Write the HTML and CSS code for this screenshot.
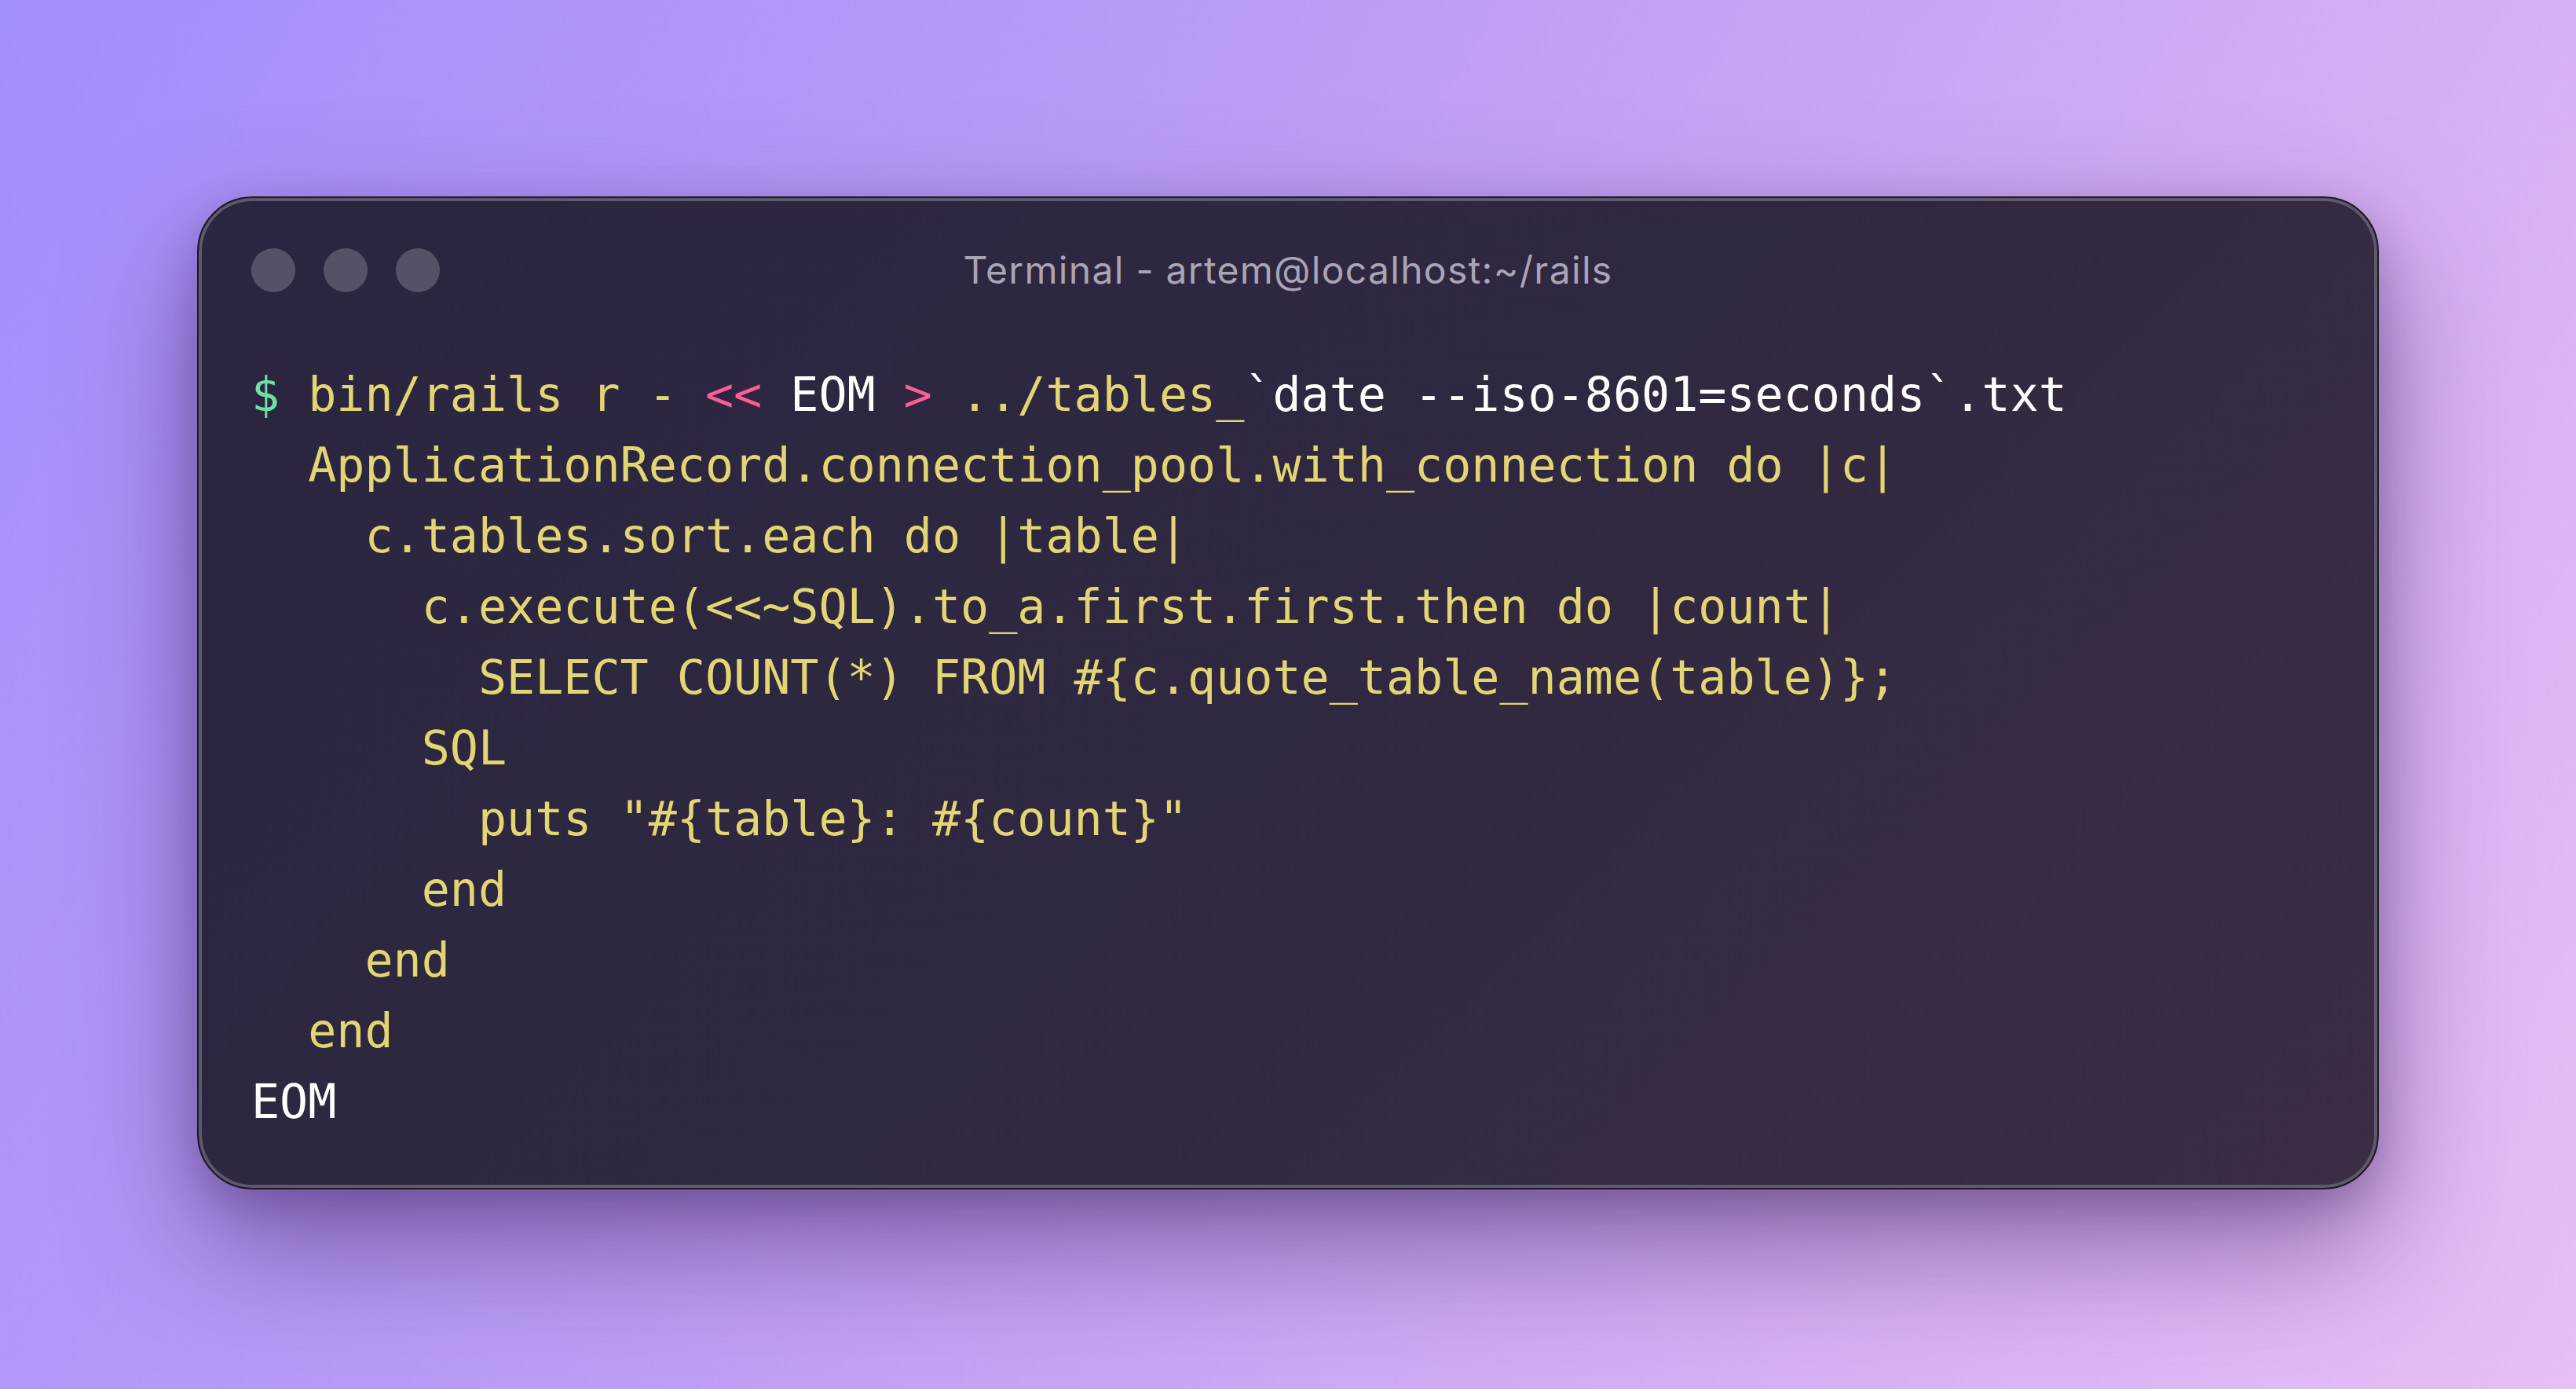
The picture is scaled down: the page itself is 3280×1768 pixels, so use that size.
FILE: index.html
```html
<!DOCTYPE html>
<html lang="en">
<head>
<meta charset="utf-8">
<title>Terminal</title>
<link rel="stylesheet" href="styles.css">
</head>
<body>
<div class="window">
  <div class="titlebar">
    <div class="dots"><span class="dot"></span><span class="dot"></span><span class="dot"></span></div>
    <div class="title">Terminal - artem@localhost:~/rails</div>
    <div class="spacer"></div>
  </div>
<pre class="code"><span class="g">$</span> <span class="y">bin/rails r -</span> <span class="p">&lt;&lt;</span> <span class="w">EOM</span> <span class="p">&gt;</span> <span class="y">../tables_</span><span class="w">`date --iso-8601=seconds`.txt</span>
<span class="y">  ApplicationRecord.connection_pool.with_connection do |c|</span>
<span class="y">    c.tables.sort.each do |table|</span>
<span class="y">      c.execute(&lt;&lt;~SQL).to_a.first.first.then do |count|</span>
<span class="y">        SELECT COUNT(*) FROM #{c.quote_table_name(table)};</span>
<span class="y">      SQL</span>
<span class="y">        puts "#{table}: #{count}"</span>
<span class="y">      end</span>
<span class="y">    end</span>
<span class="y">  end</span>
<span class="w">EOM</span></pre>
</div>
</body>
</html>
```
FILE: styles.css
```css
html, body {
  margin: 0;
  padding: 0;
}
body {
  width: 3280px;
  height: 1768px;
  box-sizing: border-box;
  padding-top: 250px;
  overflow: hidden;
  background: linear-gradient(120deg, #a48efb 0%, #bb9df6 40%, #d5b0f3 75%, #e6bff6 100%);
}
.window {
  width: 2778px;
  height: 1264px;
  box-sizing: border-box;
  margin: 0 auto;
  border: 2px solid #1d1926;
  border-radius: 70px;
  padding: 0 67px 65px;
  background: linear-gradient(135deg, #2a2540 0%, #302840 50%, #3b2e44 100%);
  box-shadow: inset 0 0 0 4px #5e596b, 0 70px 160px rgba(70, 40, 100, 0.55), 0 20px 50px rgba(60, 30, 90, 0.25);
}
.titlebar {
  display: grid;
  grid-template-columns: 1fr auto 1fr;
  align-items: center;
  height: 56px;
  padding-top: 64px;
}
.dots {
  display: flex;
  gap: 36px;
}
.dot {
  width: 56px;
  height: 56px;
  border-radius: 50%;
  background: #575168;
}
.title {
  font-family: Inter, "Noto Sans", sans-serif;
  font-size: 48px;
  letter-spacing: 1.3px;
  line-height: 56px;
  color: #aaa5b4;
  white-space: nowrap;
}
.code {
  margin: 85px 0 0;
  font-family: "DejaVu Sans Mono", "Liberation Mono", monospace;
  font-size: 60px;
  line-height: 90px;
  color: #e1d673;
}
.y { color: #e1d673; }
.g { color: #6de0a5; }
.p { color: #ff5d98; }
.w { color: #ffffff; }
```
